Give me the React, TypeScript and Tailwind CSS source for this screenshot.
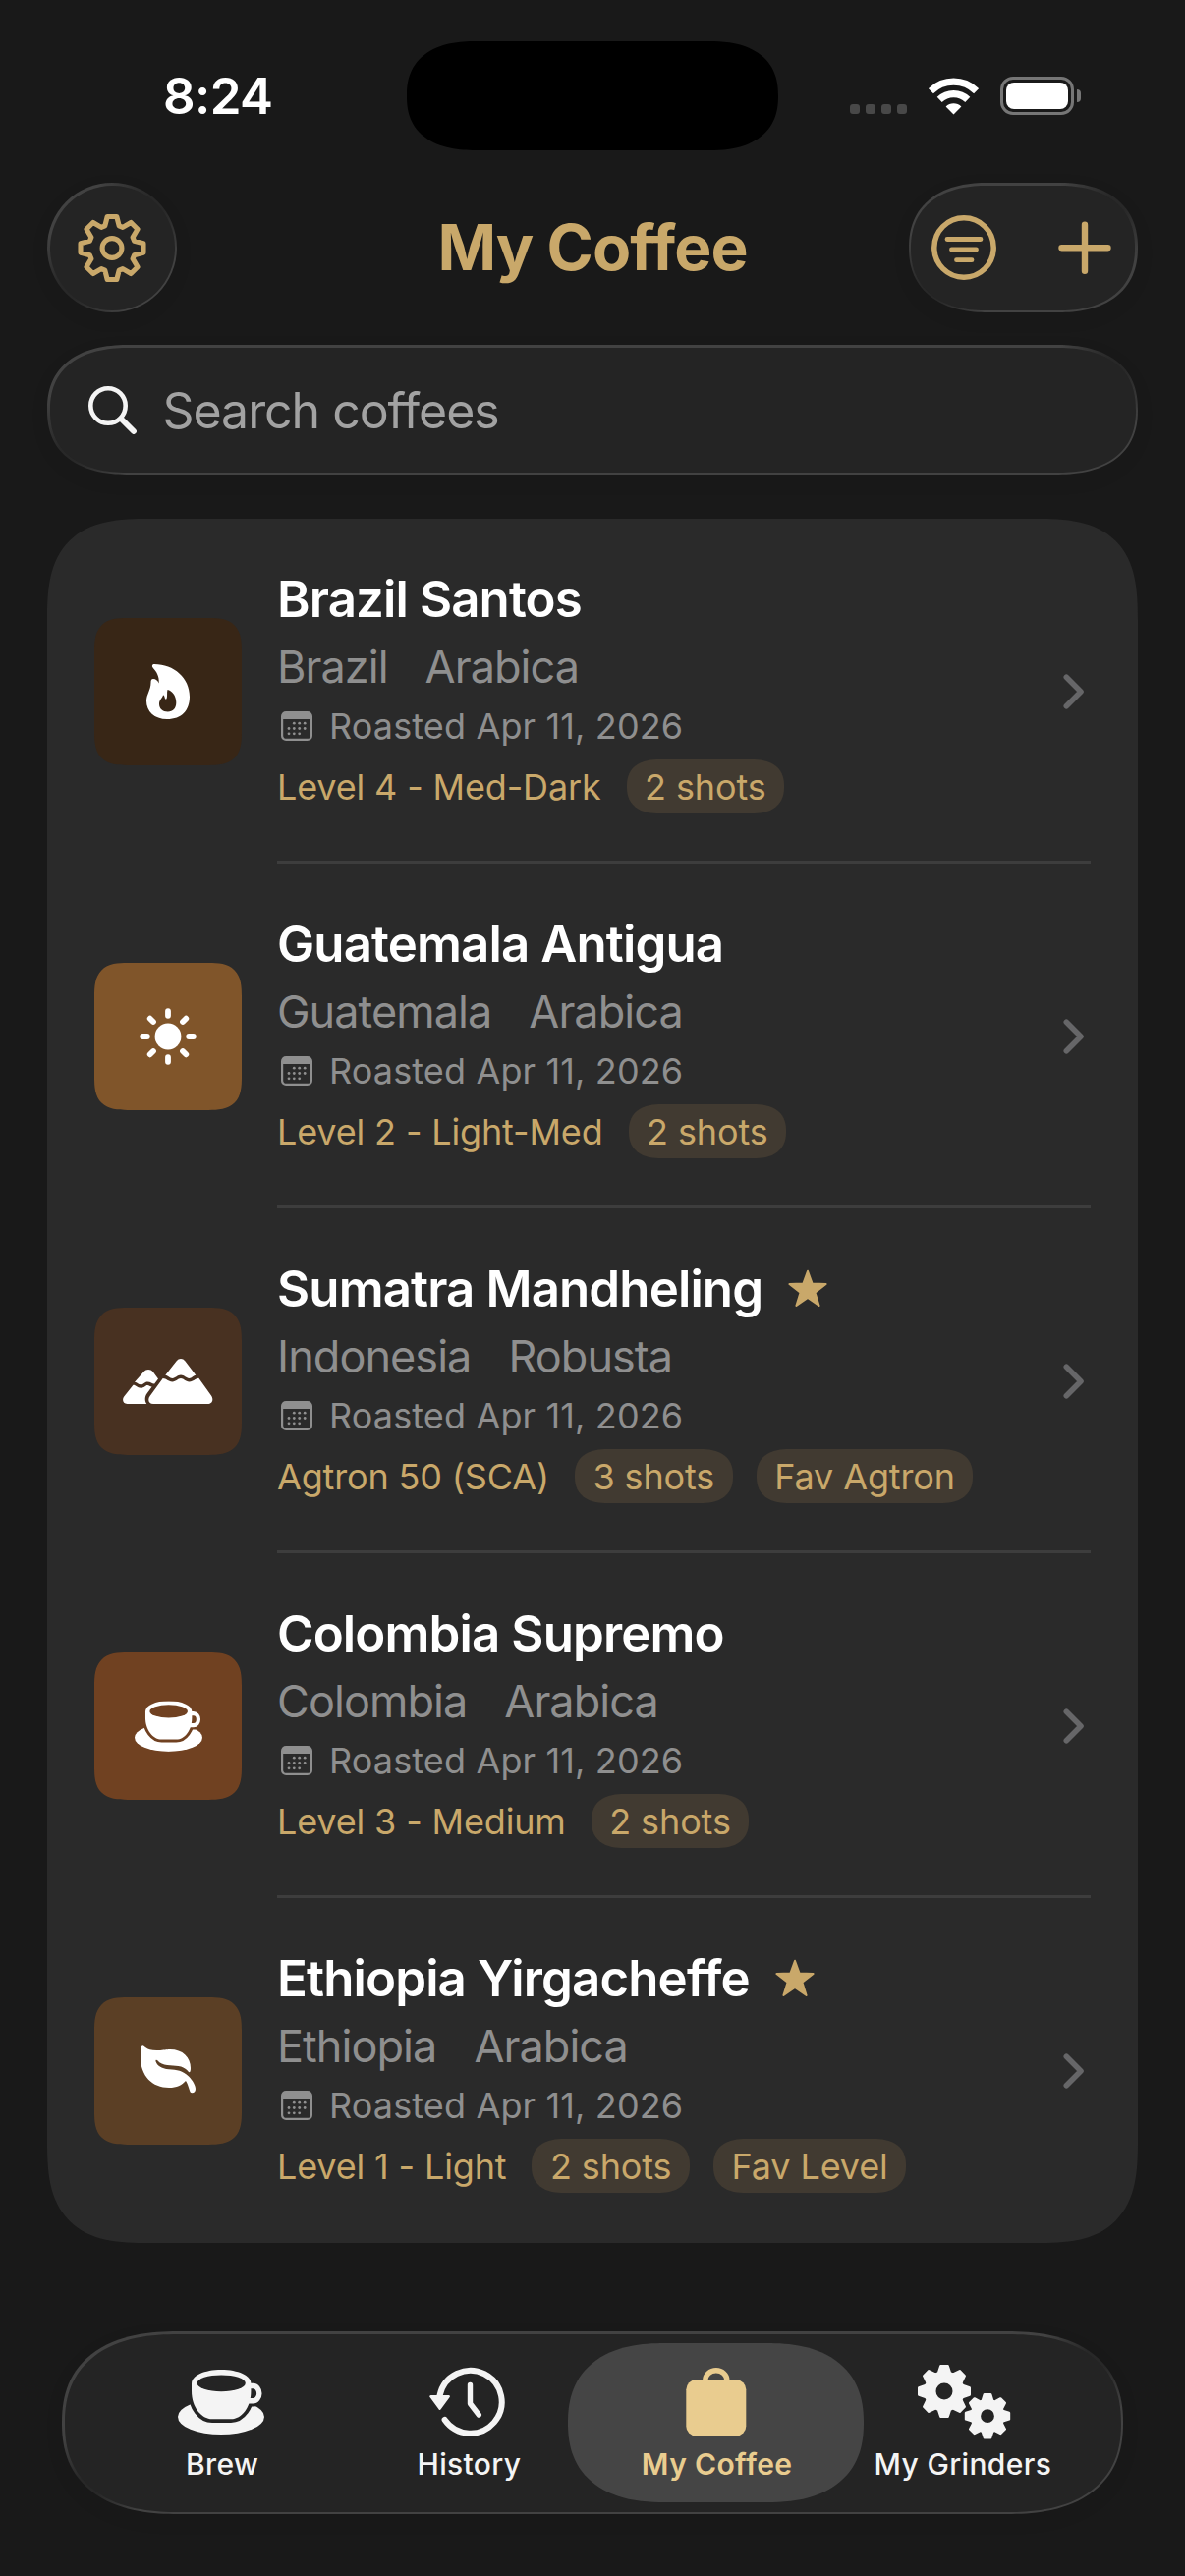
import React from 'react';

type IconProps = { className?: string };

type Coffee = {
  name: string;
  origin: string;
  bean: string;
  roasted: string;
  level: string;
  tags: string[];
  favorite?: boolean;
  tile: string;
  icon: React.ReactNode;
};

const coffees: Coffee[] = [
  {
    name: 'Brazil Santos',
    origin: 'Brazil',
    bean: 'Arabica',
    roasted: 'Roasted Apr 11, 2026',
    level: 'Level 4 - Med-Dark',
    tags: ['2 shots'],
    tile: 'bg-[#382616]',
    icon: <FlameIcon className="w-11 h-14" />,
  },
  {
    name: 'Guatemala Antigua',
    origin: 'Guatemala',
    bean: 'Arabica',
    roasted: 'Roasted Apr 11, 2026',
    level: 'Level 2 - Light-Med',
    tags: ['2 shots'],
    tile: 'bg-[#80552a]',
    icon: <SunIcon className="w-[58px] h-[58px]" />,
  },
  {
    name: 'Sumatra Mandheling',
    origin: 'Indonesia',
    bean: 'Robusta',
    roasted: 'Roasted Apr 11, 2026',
    level: 'Agtron 50 (SCA)',
    tags: ['3 shots', 'Fav Agtron'],
    favorite: true,
    tile: 'bg-[#483121]',
    icon: <MountainIcon className="w-[92px] h-[46px]" />,
  },
  {
    name: 'Colombia Supremo',
    origin: 'Colombia',
    bean: 'Arabica',
    roasted: 'Roasted Apr 11, 2026',
    level: 'Level 3 - Medium',
    tags: ['2 shots'],
    tile: 'bg-[#704121]',
    icon: <CupIcon className="w-[69px] h-[52px]" />,
  },
  {
    name: 'Ethiopia Yirgacheffe',
    origin: 'Ethiopia',
    bean: 'Arabica',
    roasted: 'Roasted Apr 11, 2026',
    level: 'Level 1 - Light',
    tags: ['2 shots', 'Fav Level'],
    favorite: true,
    tile: 'bg-[#5b3f25]',
    icon: <LeafIcon className="w-14 h-[49px] -mt-1" />,
  },
];

function App() {
  return (
    <div className="w-[1206px] h-[2622px] overflow-hidden bg-[#191919] font-['Inter',sans-serif] text-white flex flex-col">
      <StatusBar />

      {/* Navigation bar */}
      <header className="h-[132px] mt-[10px] mx-12 flex items-center justify-between">
        <Glass className="w-[132px] h-[132px] rounded-full" inner="rounded-full flex items-center justify-center">
          <SettingsIcon className="w-[70px] h-[70px]" />
        </Glass>
        <h1 className="text-[64px] leading-none font-bold tracking-[-0.95px] text-[#c9a86a] ml-[101px]">My Coffee</h1>
        <Glass
          className="w-[233px] h-[132px] rounded-[80px/66px] [corner-shape:superellipse(1.2)]"
          inner="rounded-[78px/64px] [corner-shape:superellipse(1.2)] flex items-center justify-between pl-[21px] pr-6"
        >
          <FilterIcon className="w-[66px] h-[66px]" />
          <PlusIcon className="w-[54px] h-[54px]" />
        </Glass>
      </header>

      {/* Search */}
      <Glass
        className="h-[132px] mt-[33px] mx-12 rounded-[84px/66px] [corner-shape:superellipse(1.25)]"
        inner="rounded-[82px/64px] [corner-shape:superellipse(1.25)] flex items-center pl-[39px]"
      >
        <SearchIcon className="w-[49px] h-[49px]" />
        <span className="ml-[27px] mt-[2px] text-[50px] leading-none tracking-[-1.05px] text-[#a2a2a2]">Search coffees</span>
      </Glass>

      {/* Coffee list */}
      <main className="mt-[45px] mx-12 bg-[#2a2a2a] rounded-[104px] [corner-shape:superellipse(1.5)]">
        {coffees.map((coffee, i) => (
          <CoffeeRow key={coffee.name} coffee={coffee} last={i === coffees.length - 1} />
        ))}
      </main>

      <TabBar />
    </div>
  );
}

function Glass({ className, inner, children }: { className: string; inner: string; children: React.ReactNode }) {
  return (
    <div
      className={`p-[2.5px] shrink-0 bg-[#424242] bg-[radial-gradient(circle_at_calc(100%-26px)_26px,#282828_12px,transparent_58px),radial-gradient(circle_at_26px_calc(100%-26px),#282828_12px,transparent_58px)] shadow-[0_6px_24px_rgba(0,0,0,0.04)] ${className}`}
    >
      <div className={`w-full h-full bg-[#242424] ${inner}`}>{children}</div>
    </div>
  );
}

function StatusBar() {
  return (
    <div className="h-[176px] pt-[42px] shrink-0 flex">
      <div className="w-[414px] h-[111px] flex items-center pl-[166px]">
        <span className="text-[51px] leading-none font-semibold tracking-[-0.6px]">8:24</span>
      </div>
      <div className="w-[378px] h-[111px] bg-black rounded-[70px/55px] [corner-shape:superellipse(1.25)]" />
      <div className="h-[111px] flex items-center pl-[73px]">
        <div className="flex gap-[6px] mt-[27px]">
          <span className="w-[10px] h-[10px] rounded-[3px] bg-[#484848]" />
          <span className="w-[10px] h-[10px] rounded-[3px] bg-[#484848]" />
          <span className="w-[10px] h-[10px] rounded-[3px] bg-[#484848]" />
          <span className="w-[10px] h-[10px] rounded-[3px] bg-[#484848]" />
        </div>
        <WifiIcon className="w-[51px] h-[38px] ml-[22px]" />
        <div className="ml-[22px] w-[75px] h-[39px] rounded-[13px] border-3 border-[#767676] p-[3px]">
          <div className="w-full h-full rounded-[8px] bg-white" />
        </div>
        <div className="ml-[3px] w-1 h-[13px] rounded-r-full bg-[#767676]" />
      </div>
    </div>
  );
}

function CoffeeRow({ coffee, last }: { coffee: Coffee; last: boolean }) {
  return (
    <div className="h-[351px] pl-12 pr-12 flex">
      <div
        className={`mt-[101px] w-[150px] h-[150px] shrink-0 rounded-[34px] [corner-shape:superellipse(1.5)] flex items-center justify-center ${coffee.tile}`}
      >
        {coffee.icon}
      </div>
      <div className={`ml-9 flex-1 flex ${last ? '' : 'border-b-3 border-[#3d3d3d]'}`}>
        <div className="flex-1 pt-12 whitespace-nowrap">
          <div className="h-[66px] flex items-center">
            <h2 className="text-[51px] leading-none font-semibold tracking-[-0.88px]">{coffee.name}</h2>
            {coffee.favorite && <StarIcon className="w-10 h-[39px] ml-[26px] text-[#c9a86a]" />}
          </div>
          <div className="mt-[6px] h-[60px] flex items-center gap-[38px] text-[45px] leading-none tracking-[-0.95px] text-[#8f8f8f]">
            <span>{coffee.origin}</span>
            <span>{coffee.bean}</span>
          </div>
          <div className="mt-[7px] h-12 flex items-center pl-1 text-[#8f8f8f]">
            <CalendarIcon className="w-8 h-[30px]" />
            <span className="ml-[17px] text-[36px] leading-none tracking-[0.13px]">{coffee.roasted}</span>
          </div>
          <div className="mt-[10px] h-[55px] flex items-center text-[36px] leading-none text-[#c9a86a]">
            <span className="tracking-[-0.15px] mr-[2px]">{coffee.level}</span>
            {coffee.tags.map((tag) => (
              <span
                key={tag}
                className="ml-6 h-[55px] px-[18.5px] flex items-center tracking-[-0.12px] bg-[#413a31] rounded-[33px/27px] [corner-shape:superellipse(1.25)]"
              >
                {tag}
              </span>
            ))}
          </div>
        </div>
        <div className="mt-[158px] mr-[6px]">
          <ChevronIcon className="w-[22px] h-9" />
        </div>
      </div>
    </div>
  );
}

function TabBar() {
  return (
    <Glass
      className="h-[186px] mt-[90px] mx-[63px] rounded-[118px/93px] [corner-shape:superellipse(1.25)]"
      inner="rounded-[116px/91px] [corner-shape:superellipse(1.25)] flex px-[35px] text-[#f4f4f4]"
    >
      <Tab label="Brew">
        <CupIcon className="w-[88px] h-[66px] mr-[3px]" />
      </Tab>
      <Tab label="History">
        <HistoryIcon className="w-[77px] h-[71px] mr-[3px]" />
      </Tab>
      <Tab label="My Coffee" active>
        <BagIcon className="w-[62px] h-[70px]" />
      </Tab>
      <Tab label="My Grinders">
        <GearsIcon className="w-[95px] h-[76px] ml-[4px]" />
      </Tab>
    </Glass>
  );
}

function Tab({ label, active, children }: { label: string; active?: boolean; children: React.ReactNode }) {
  return (
    <div className={`relative flex-1 flex flex-col items-center whitespace-nowrap ${active ? 'text-[#e9cc8f]' : ''}`}>
      {active && (
        <div className="absolute top-[9.5px] -left-[25px] -right-[25px] h-[162px] bg-[#454545] rounded-[98px/81px] [corner-shape:superellipse(1.25)]" />
      )}
      <div className="relative mt-[30px] h-[78px] flex items-center">{children}</div>
      <span className={`relative mt-[7px] text-[30px] leading-[34px] tracking-[0.35px] ${active ? 'font-semibold left-px' : 'font-medium'}`}>
        {label}
      </span>
    </div>
  );
}

/* Icons */

// Closed outline of an eight-toothed gear around (cx, cy)
function gearPath(cx: number, cy: number, outer: number, topHalf: number, root: number, rootHalf: number) {
  const points: string[] = [];
  for (let i = 0; i < 8; i++) {
    const a = (i * Math.PI) / 4;
    const corners = [
      [-rootHalf, -root],
      [-topHalf, -outer],
      [topHalf, -outer],
      [rootHalf, -root],
    ];
    for (const [x, y] of corners) {
      const px = cx + x * Math.cos(a) - y * Math.sin(a);
      const py = cy + x * Math.sin(a) + y * Math.cos(a);
      points.push(`${px.toFixed(2)} ${py.toFixed(2)}`);
    }
  }
  return `M${points.join('L')}Z`;
}

function SettingsIcon({ className }: IconProps) {
  return (
    <svg className={className} viewBox="0 0 70 70" fill="none" stroke="#c9a86a" strokeWidth="5.1" strokeLinejoin="round">
      <path d={gearPath(35, 35.5, 32, 4.8, 22.6, 7.2)} />
      <circle cx="35" cy="35.5" r="9.9" />
    </svg>
  );
}

function FilterIcon({ className }: IconProps) {
  return (
    <svg className={className} viewBox="0 0 66 66" fill="none" stroke="#c9a86a" strokeWidth="4.8" strokeLinecap="round">
      <circle cx="33" cy="33" r="30.2" strokeWidth="5.5" />
      <path d="M16 24.5h34M20.5 35h25M25.5 45.7h15.5" />
    </svg>
  );
}

function PlusIcon({ className }: IconProps) {
  return (
    <svg className={className} viewBox="0 0 54 54" fill="none" stroke="#c9a86a" strokeWidth="6.4" strokeLinecap="round">
      <path d="M27 3.7v47M3.5 27.2h47" />
    </svg>
  );
}

function SearchIcon({ className }: IconProps) {
  return (
    <svg className={className} viewBox="0 0 49 49" fill="none" stroke="#f4f4f4" strokeLinecap="round">
      <circle cx="20" cy="20" r="17.7" strokeWidth="4.6" />
      <path d="M33.5 33.5 46 46" strokeWidth="5.8" />
    </svg>
  );
}

function WifiIcon({ className }: IconProps) {
  return (
    <svg className={className} viewBox="0 0 51 38" fill="none" stroke="#fff" strokeWidth="7.2">
      <path d="M2.4 13.6a33 33 0 0 1 46.2 0" />
      <path d="M11.2 22.4a20.6 20.6 0 0 1 28.6 0" />
      <path d="M25.5 37.5 17.6 29.5a11.4 11.4 0 0 1 15.8 0Z" fill="#fff" stroke="none" />
    </svg>
  );
}

function ChevronIcon({ className }: IconProps) {
  return (
    <svg className={className} viewBox="0 0 22 36" fill="none" stroke="#666668" strokeWidth="5.6" strokeLinecap="round" strokeLinejoin="round">
      <path d="M3.3 3.3 18 18 3.3 32.7" />
    </svg>
  );
}

function StarIcon({ className }: IconProps) {
  return (
    <svg className={className} viewBox="0 0 40 39" fill="currentColor" stroke="currentColor" strokeWidth="2" strokeLinejoin="round">
      <path d="M20 1.8 24.6 14.6 38.6 15 27.4 23.6 31.6 37 20 29 8.4 37 12.6 23.6 1.4 15 15.4 14.6Z" />
    </svg>
  );
}

function CalendarIcon({ className }: IconProps) {
  const dots = [
    [13.3, 12.2], [18.7, 12.2], [24.2, 12.2],
    [8, 17.5], [13.3, 17.5], [18.7, 17.5], [24.2, 17.5],
    [8, 22.8], [13.3, 22.8], [18.7, 22.8],
  ];
  return (
    <svg className={className} viewBox="0 0 32 30" fill="currentColor">
      <rect x="1.1" y="1.1" width="29.8" height="27.8" rx="4" fill="none" stroke="currentColor" strokeWidth="2.2" />
      <path d="M1 8V5a4 4 0 0 1 4-4h22a4 4 0 0 1 4 4v3Z" />
      {dots.map(([x, y]) => (
        <circle key={`${x}-${y}`} cx={x} cy={y} r="1.4" />
      ))}
    </svg>
  );
}

function FlameIcon({ className }: IconProps) {
  return (
    <svg className={className} viewBox="0 0 44 56" fill="#fff" fillRule="evenodd">
      <path d="M8 0C28 0 44 14 44 33C44 47 36 56 21 56C8 56 0 48 0 37.5C0 31 4.5 26 4.5 19C4.5 16.5 5 15 7 15C9.5 15 11.5 16.5 12.7 19.5C13.3 12 10 7.5 6.7 3.8C5.2 2 6 0 8 0ZM21.5 26C20.6 29 21.6 32.5 20.6 35C20 36.2 19 35.6 18.8 34.5C18.5 32.8 18 31.2 17 31.4C16.4 34 13 36.2 13 40.5C13 45.3 16.5 48.5 21.8 48.5C27 48.5 30.3 45 30.3 39C30.3 32 26 27 21.5 26Z" />
    </svg>
  );
}

function SunIcon({ className }: IconProps) {
  return (
    <svg className={className} viewBox="0 0 58 58" fill="#fff" stroke="#fff" strokeWidth="5.8" strokeLinecap="round">
      <circle cx="29" cy="29" r="13.4" stroke="none" />
      <path d="M29 3.2v4.6M29 50.2v4.6M3.2 29h4.6M50.2 29h4.6M10.7 10.7 14 14M44 44l3.3 3.3M10.7 47.3 14 44M44 14l3.3-3.3" />
    </svg>
  );
}

function MountainIcon({ className }: IconProps) {
  return (
    <svg className={className} viewBox="0 0 92 46" fill="#fff">
      <path d="M54.5 2.5C57 -.8 61 -.8 63.5 2.5L74.3 16.8C71 17.5 70.5 19.9 67.5 19.9C64.5 19.9 62.5 16.5 59 16.5C55.5 16.5 53.5 19.9 50.5 19.9C47.5 19.9 46.5 17.3 43.3 16.8Z" />
      <path d="M40.7 20C44.5 20 46 23.4 50.4 23.4C54.5 23.4 56 20 59 20C62 20 63.5 23.4 67.6 23.4C72 23.4 73.5 20.2 77.3 19.8L90 37.5C93 42 90.5 46 86.5 46H31C26.3 46 25 41.5 27.6 38Z" />
      <path d="M21.5 13C23.5 10.2 28.5 10.2 30.5 13L36 20.5L32.2 25.5C30 25.8 28.5 23.4 25.2 23.4C22 23.4 21 26.3 18.3 26.3C15.8 26.3 14.8 24 12 23.7Z" />
      <path d="M10.5 26.8C13.5 26.8 14.5 29.7 18.3 29.7C21.8 29.7 23 26.8 25.2 26.9C26.8 27 27.6 28.4 29.6 28.4L24.5 35.5C22 39 22.3 43.5 24.3 46H4.5C0 46-1 41.5 1.2 38.5Z" />
    </svg>
  );
}

function CupIcon({ className }: IconProps) {
  const cup = 'M14 14C14 6 27 0 44.2 0S74.4 6 74.4 14V22C74.4 38 65 50.3 54 50.3H35C24 50.3 14 38 14 22Z';
  const handle = 'M73 16.5H76.5A6.3 7.6 0 0 1 76.5 31.8H71';
  return (
    <svg className={className} viewBox="0 0 88 66" fill="currentColor">
      <mask id="saucer" maskUnits="userSpaceOnUse" x="0" y="0" width="88" height="66">
        <rect width="88" height="66" fill="#fff" />
        <path d={cup} fill="#000" stroke="#000" strokeWidth="7.5" />
        <path d={handle} fill="#000" stroke="#000" strokeWidth="11.5" />
      </mask>
      <mask id="rim" maskUnits="userSpaceOnUse" x="0" y="0" width="88" height="66">
        <rect width="88" height="66" fill="#fff" />
        <ellipse cx="44.2" cy="13.8" rx="24.6" ry="8.4" fill="#000" />
      </mask>
      <ellipse cx="44" cy="48" rx="44" ry="18" mask="url(#saucer)" />
      <path d={cup} mask="url(#rim)" />
      <path d={handle} fill="none" stroke="currentColor" strokeWidth="5.4" />
    </svg>
  );
}

function LeafIcon({ className }: IconProps) {
  return (
    <svg className={className} viewBox="0 0 56 49" fill="#fff">
      <path d="M2.3.3C4.5.3 5 5.5 18 5C24 4.8 26 4 30 4C43 4 51 12 51 23C51 25.5 50.5 27.3 49.7 27.3C48.5 27.3 46.5 22 38.5 21C32 20 22 21.5 17.3 15.3C16.3 14.2 15 14.8 15.5 16.3C17 20.5 21 23.7 29 24.3C37 25 43 25.5 49 31.5C53 35.5 56 40.5 56 44.3C56 47 54.5 48.3 52.5 48.3C50.8 48.3 50.2 47 49.7 45C48.7 41.5 47.5 38 46 36C42 40.5 37 43 29 43C12 43 0 31 0 12C0 5 .3.3 2.3.3Z" />
    </svg>
  );
}

function HistoryIcon({ className }: IconProps) {
  return (
    <svg className={className} viewBox="0 0 77 71" fill="none" stroke="currentColor" strokeWidth="6" strokeLinecap="round" strokeLinejoin="round">
      <path d="M10.6 29A31.9 31.9 0 1 1 15.6 54" />
      <path d="M1.6 30.2H19.6L10.6 42.6Z" fill="currentColor" strokeWidth="2.6" />
      <path d="M41.5 18.5V37.5L50.3 49" strokeWidth="5.4" />
    </svg>
  );
}

function BagIcon({ className }: IconProps) {
  return (
    <svg className={className} viewBox="0 0 62 70" fill="currentColor">
      <rect x="0.3" y="12.3" width="61" height="57.2" rx="10" />
      <path d="M19.7 14V13a11.1 10.2 0 0 1 22.2 0v1" fill="none" stroke="currentColor" strokeWidth="5.4" />
    </svg>
  );
}

function GearsIcon({ className }: IconProps) {
  return (
    <svg className={className} viewBox="0 0 95 76" fill="none" stroke="currentColor" strokeLinejoin="round">
      <path d={gearPath(27, 27, 25.8, 3.6, 18.6, 6)} strokeWidth="2.4" />
      <path d={`${gearPath(27, 27, 25.8, 3.6, 18.6, 6)}M18.5 27a8.5 8.5 0 1 1 17 0a8.5 8.5 0 1 1-17 0Z`} fill="currentColor" fillRule="evenodd" stroke="none" />
      <path d={gearPath(71, 52.2, 22, 3.2, 15.6, 5.2)} strokeWidth="2.4" />
      <path d={`${gearPath(71, 52.2, 22, 3.2, 15.6, 5.2)}M64.1 52.2a6.9 6.9 0 1 1 13.8 0a6.9 6.9 0 1 1-13.8 0Z`} fill="currentColor" fillRule="evenodd" stroke="none" />
    </svg>
  );
}

export default App;
